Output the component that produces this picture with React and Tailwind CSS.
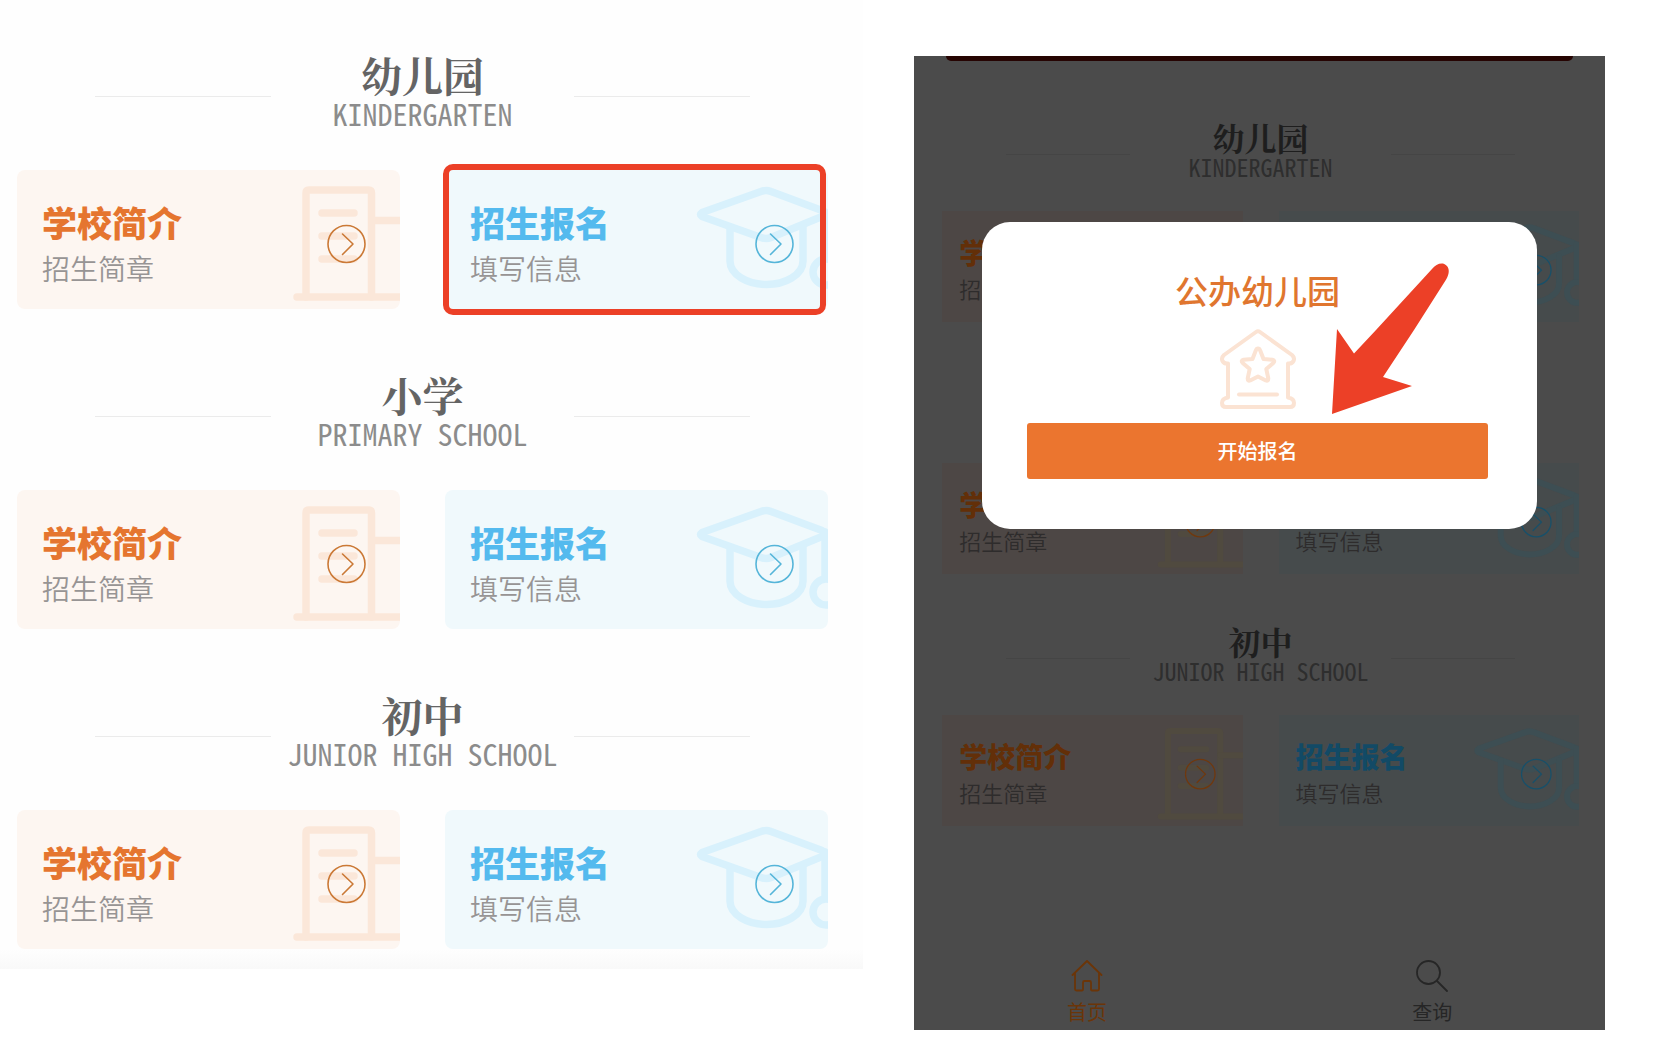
import clsx from "clsx";

const LEVELS = [
  { id: "kindergarten", name: "幼儿园", english: "KINDERGARTEN" },
  { id: "primary", name: "小学", english: "PRIMARY SCHOOL" },
  { id: "junior", name: "初中", english: "JUNIOR HIGH SCHOOL" },
];

const CARDS = [
  { id: "intro", title: "学校简介", subtitle: "招生简章", tone: "orange" },
  { id: "apply", title: "招生报名", subtitle: "填写信息", tone: "blue" },
];

const TONES = {
  page: {
    orange: {
      card: "bg-[#fdf6f1]",
      title: "text-[#e5752f]",
      art: "text-[#fbe7d9]",
      arrow: "text-[#cb7936]",
    },
    blue: {
      card: "bg-[#f0f9fc]",
      title: "text-[#54baee]",
      art: "text-[#d8f1fc]",
      arrow: "text-[#55b5d9]",
    },
    subtitle: "text-[#979494]",
  },
  dimmed: {
    orange: {
      card: "bg-[#4d4745]",
      title: "text-[#632f08]",
      art: "text-[#504a3f]",
      arrow: "text-[#70380d]",
    },
    blue: {
      card: "bg-[#464b4c]",
      title: "text-[#124a66]",
      art: "text-[#3d4e53]",
      arrow: "text-[#17506a]",
    },
    subtitle: "text-[#2e2c2c]",
  },
};

function CardArt({ tone, colors }) {
  return (
    <svg
      viewBox="0 0 134 139"
      className="absolute right-0 top-0 h-full w-auto"
      fill="none"
      strokeLinecap="round"
      strokeLinejoin="round"
      aria-hidden="true"
    >
      <g className={colors.art} stroke="currentColor" strokeWidth="7.5">
        {tone === "orange" ? (
          <>
            <path d="M40 127V23q0-3 3-3h59.500q3 0 3 3v104" />
            <path d="M31 127h110M106 50.500h35" />
            <path d="M56 43h32M56 66h32M56 89h32" />
          </>
        ) : (
          <>
            <path d="M8 42.500 67 21.500q5-2 10 0l51 19q6 3 0 6L77 67.500q-5 2-10 0L8 46.500q-3-2 0-4z" />
            <path d="M36 57v34c0 14 18 23.500 36.500 23.500S109 105 109 91V57" />
            <path d="M131 42v46" />
            <circle cx="132" cy="102" r="13" />
          </>
        )}
      </g>
      <g className={colors.arrow} stroke="currentColor" strokeWidth="1.6">
        <circle cx="80.500" cy="74" r="18.500" />
        <path d="m76.500 64 10.500 10-10.500 10.500" />
      </g>
    </svg>
  );
}

function EntryCard({ card, small, highlighted }) {
  const tones = small ? TONES.dimmed : TONES.page;
  const colors = tones[card.tone];

  return (
    <div className="relative">
      <a
        href={`#${card.id}`}
        className={clsx(
          "relative block overflow-hidden",
          small
            ? "h-[111px] pl-[17px] pt-[23px]"
            : "h-[139px] rounded-lg pl-[25px] pt-[29px]",
          colors.card
        )}
      >
        <CardArt tone={card.tone} colors={colors} />
        <span
          className={clsx(
            "relative block font-black",
            small ? "text-[28px] leading-9" : "text-[35px] leading-[46px]",
            colors.title
          )}
        >
          {card.title}
        </span>
        <span
          className={clsx(
            "relative block font-[350]",
            small ? "text-[22px] leading-9" : "text-[28px] leading-[46px]",
            tones.subtitle
          )}
        >
          {card.subtitle}
        </span>
      </a>
      {highlighted && (
        <div className="pointer-events-none absolute -inset-y-1.5 -left-0.5 right-0.5 rounded-[10px] border-6 border-[#ec4027]" />
      )}
    </div>
  );
}

function LevelSection({ level, small, highlight }) {
  const rule = clsx(
    "h-px self-start",
    small ? "mt-[35px] bg-[#454545]" : "mt-[43px] bg-[#ebebeb]"
  );

  return (
    <section>
      <div
        className={clsx(
          "grid",
          small
            ? "grid-cols-[124px_1fr_124px] px-16"
            : "grid-cols-[176px_1fr_176px] px-[78px]"
        )}
      >
        <div className={rule} />
        <div className="flex flex-col items-center whitespace-nowrap">
          <h2
            className={clsx(
              "font-['KaiTi','Noto_Serif_CJK_SC','Noto_Sans_CJK_SC',serif] font-bold",
              small
                ? "text-[32px] leading-9 text-[#1e1e1e]"
                : "text-[41px] leading-[44px] text-[#646464]"
            )}
          >
            {level.name}
          </h2>
          <p
            className={clsx(
              "font-['Noto_Sans_Mono_CJK_SC','Liberation_Mono',monospace] font-medium",
              small
                ? "text-[24px] leading-6 text-[#2e2e2e]"
                : "text-[30px] leading-8 text-[#8c8c8c]"
            )}
          >
            {level.english}
          </p>
        </div>
        <div className={rule} />
      </div>
      <div
        className={clsx(
          "grid grid-cols-2",
          small ? "mt-8 gap-9" : "mt-[41px] gap-[45px]"
        )}
      >
        {CARDS.map((card) => (
          <EntryCard
            key={card.id}
            card={card}
            small={small}
            highlighted={highlight === card.id}
          />
        ))}
      </div>
    </section>
  );
}

function SchoolIcon() {
  return (
    <svg
      viewBox="0 0 76 82"
      className="mx-auto mt-4 block h-[82px] w-[76px] text-[#fbe3d3]"
      fill="none"
      stroke="currentColor"
      strokeWidth="4"
      strokeLinecap="round"
      strokeLinejoin="round"
      aria-hidden="true"
    >
      <path d="M36 4q2-1.500 4 0l32 23q3 3 1.500 6t-5.500 2.500v34q6 1 6 5.500 0 4-4 4H6q-4 0-4-4 0-4.500 6-5.500v-34Q4 36 2.500 33T4 27z" />
      <path d="M38 20.500q1.500 0 2.200 2l3.300 8.500 9 .8q3 .7.800 3.200l-7 6 2 9.500q0 3-2.500 2L38 48.500l-7.800 4q-2.500 1-2.500-2l2-9.500-7-6q-2.200-2.500.8-3.200l9-.8 3.300-8.500q.7-2 2.200-2z" />
      <path d="M19 66.500h38" />
    </svg>
  );
}

function PointerArrow() {
  return (
    <svg
      viewBox="0 0 120 154"
      className="pointer-events-none absolute left-[calc(50%+70px)] top-10 h-[154px] w-[120px] text-[#ec4027]"
      fill="currentColor"
      aria-hidden="true"
    >
      <path d="M2 152 7 67l17 24.500L46 68 102 7c3-4 7-6 11-5.500 5 1.500 6.500 6 5.500 10-.5 2.500-1.500 4.500-3 7L84 68 53 115l29 9z" />
    </svg>
  );
}

function SignupDialog() {
  return (
    <div
      role="dialog"
      aria-labelledby="signup-title"
      className="absolute inset-x-[68px] top-[166px] rounded-[28px] bg-white pb-[50px] pl-[45px] pr-[49px] pt-[46px]"
    >
      <h3
        id="signup-title"
        className="text-center text-[33px] font-medium leading-[44px] text-[#e0762f]"
      >
        公办幼儿园
      </h3>
      <SchoolIcon />
      <button
        type="button"
        className="mt-[13px] h-14 w-full rounded-[3px] bg-[#eb752f] text-[20px] font-medium text-white"
      >
        开始报名
      </button>
      <PointerArrow />
    </div>
  );
}

function TabBar() {
  return (
    <nav className="grid grid-cols-2 pb-1.5 text-[20px] leading-6">
      <a href="#home" className="flex flex-col items-center gap-2 text-[#6b3508]">
        <svg
          viewBox="0 0 32 32"
          className="h-8 w-8"
          fill="none"
          stroke="currentColor"
          strokeWidth="1.8"
          strokeLinejoin="round"
          strokeLinecap="round"
          aria-hidden="true"
        >
          <path d="M1.500 15 16 1l14.500 14M4 13V29q0 1.500 1.500 1.500h5.500q1 0 1-1v-7q0-1.500 1.500-1.500h5q1.500 0 1.500 1.500v7q0 1 1 1h5.500q1.500 0 1.500-1.500V13" />
        </svg>
        首页
      </a>
      <a href="#search" className="flex flex-col items-center gap-2 text-[#262626]">
        <svg
          viewBox="0 0 32 32"
          className="h-8 w-8"
          fill="none"
          stroke="currentColor"
          strokeWidth="1.8"
          strokeLinecap="round"
          aria-hidden="true"
        >
          <circle cx="12.500" cy="12.500" r="11.500" />
          <path d="m21 21 10 10" />
        </svg>
        查询
      </a>
    </nav>
  );
}

export default function App() {
  return (
    <main className="flex min-h-screen items-start bg-white font-['Noto_Sans_CJK_SC',sans-serif]">
      <div className="w-[52%] bg-[#fefefe] pt-[53px]">
        <div className="flex flex-col gap-16 pl-[17px] pr-[35px]">
          {LEVELS.map((level) => (
            <LevelSection
              key={level.id}
              level={level}
              highlight={level.id === "kindergarten" ? "apply" : null}
            />
          ))}
        </div>
        <div className="h-5 bg-linear-to-b from-[#fefefe] to-[#f9f9f9]" />
      </div>

      <div className="relative ml-[51px] mr-[55px] mt-14 flex-1 bg-[#4b4b4b]">
        <div className="mx-8 h-[5px] rounded-b-md bg-[#260402]" />
        <div className="flex flex-col gap-[49px] pb-[134px] pl-7 pr-[26px] pt-[58px]">
          {LEVELS.map((level) => (
            <LevelSection key={level.id} level={level} small />
          ))}
        </div>
        <TabBar />
        <SignupDialog />
      </div>
    </main>
  );
}
